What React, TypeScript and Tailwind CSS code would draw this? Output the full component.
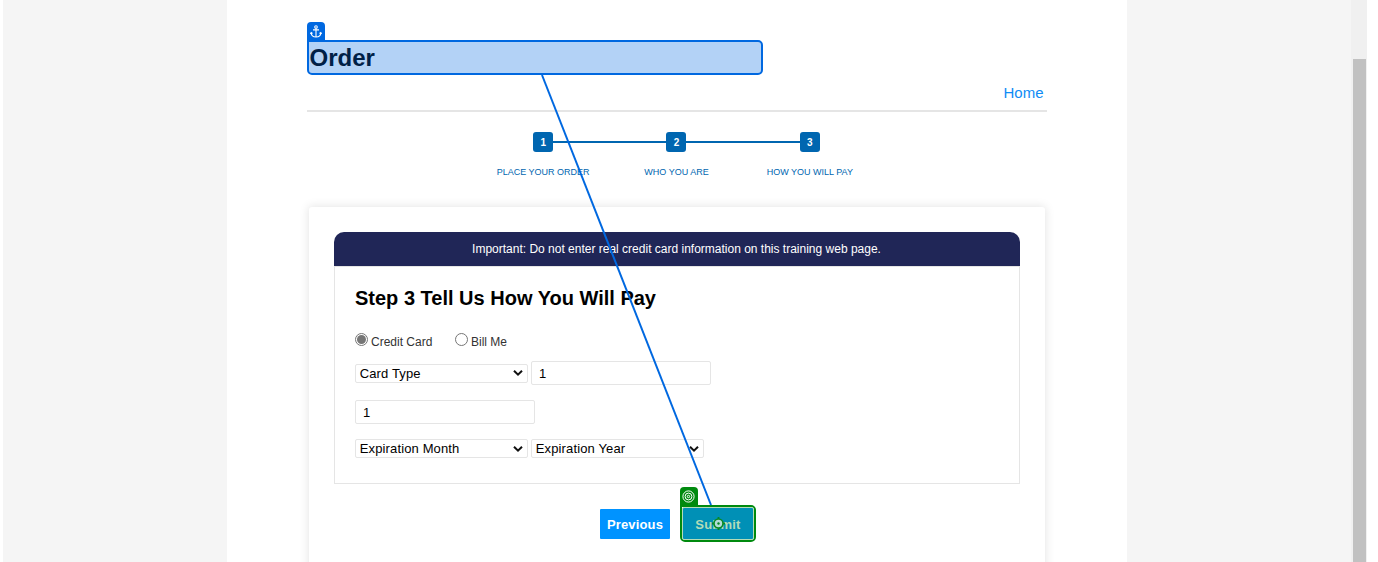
import React from "react";

function Radio({ checked = false }: { checked?: boolean }) {
  return (
    <span className="flex size-[13px] shrink-0 items-center justify-center rounded-full border border-[#767676] bg-white">
      {checked && <span className="size-[9px] rounded-full bg-[#767676]" />}
    </span>
  );
}

function Select({ label }: { label: string }) {
  return (
    <div className="flex h-[19px] w-[173px] items-center justify-between rounded-[2px] border border-[#e5e5e5] pr-1 pl-[3.7px] text-[13px] leading-[17px] text-black">
      <span className="tracking-[0.14px]">{label}</span>
      <svg width="10" height="8" viewBox="0 0 10 8" fill="none" stroke="#101010" strokeWidth="2">
        <path d="M1 1.7 L5 5.7 L9 1.7" />
      </svg>
    </div>
  );
}

function Input({ value }: { value: string }) {
  return (
    <div className="flex h-6 w-[180px] items-center rounded-[2px] border border-[#e5e5e5] px-[7px] pt-[2px] text-[13px] text-black">
      {value}
    </div>
  );
}

function Step({ n, label, line }: { n: number; label: string; line: boolean }) {
  return (
    <li className="relative flex w-[133.33px] flex-col items-center">
      {line && <span className="absolute top-[9px] right-[75px] h-[2px] w-[116px] bg-[#0066b0]" />}
      <span className="relative z-10 flex size-5 items-center justify-center rounded-[3px] bg-[#0066b0] text-[10px] font-bold text-white">
        {n}
      </span>
      <span className="mt-[15px] text-[9px] leading-[11px] whitespace-nowrap text-[#0066b0]">{label}</span>
    </li>
  );
}

export default function App() {
  return (
    <div className="relative flex h-[562px] w-[1378px] overflow-hidden bg-white pl-[3px] font-['Liberation_Sans',Arial,sans-serif]">
      <div className="flex h-full w-[1348px] justify-start bg-[#f5f5f5] pl-[224px]">
        <main className="h-full w-[900px] bg-white px-20 pt-10">
          <header className="h-[72px] border-b-2 border-[#e5e5e5]">
            <div className="relative h-[35px] w-[456px] rounded-[5px] rounded-tl-none border-2 border-[#0068e0] bg-[#b3d2f6]">
              <span className="absolute -top-5 -left-[2px] flex h-[19px] w-[18px] items-center justify-center rounded-t-[4px] bg-[#0068e0] text-white">
                <svg width="12" height="13" viewBox="0 0 12 13" fill="none" stroke="currentColor" strokeWidth="1.1">
                  <circle cx="6" cy="2" r="1.3" />
                  <path d="M6 3.3V12M3 4.9H9M1.2 7.4C1.2 10.2 3 12 6 12S10.8 10.2 10.8 7.4M.4 8.9 1.2 7.5 2.5 8.5M11.6 8.9 10.8 7.5 9.5 8.5" />
                </svg>
              </span>
              <h1 className="pl-[0.5px] text-[24px] leading-[31px] font-bold text-[#002046]">Order</h1>
            </div>
            <nav className="mt-2 flex justify-end pr-[3.5px] text-[15px] leading-5 text-[#0f8cf5]">
              <a>Home</a>
            </nav>
          </header>

          <ol className="mt-5 ml-[169.5px] flex">
            <Step n={1} label="PLACE YOUR ORDER" line={false} />
            <Step n={2} label="WHO YOU ARE" line />
            <Step n={3} label="HOW YOU WILL PAY" line />
          </ol>

          <section className="mx-[2px] mt-[29px] h-[400px] rounded-[3px] bg-white px-[25px] pt-[25px] shadow-[0_0_10px_1px_rgba(0,0,0,0.1)]">
            <div className="h-[34px] rounded-t-[10px] bg-[#202657] text-center text-[12px] leading-[34px] text-white">
              <span className="pr-px">Important: Do not enter real credit card information on this training web page.</span>
            </div>
            <div className="h-[218px] border border-[#e5e5e5] px-5 pt-[19px]">
              <h2 className="text-[20px] leading-6 font-bold text-black">Step 3 Tell Us How You Will Pay</h2>
              <div className="mt-[23px] flex h-4 text-[12px] leading-4 text-[#333]">
                <div className="flex w-[100px] gap-[3px]">
                  <Radio checked />
                  <span className="pt-[1px]">Credit Card</span>
                </div>
                <div className="flex gap-[3px]">
                  <Radio />
                  <span className="pt-[1px]">Bill Me</span>
                </div>
              </div>
              <div className="mt-3 flex items-center gap-[3px]">
                <Select label="Card Type" />
                <Input value="1" />
              </div>
              <div className="mt-[15px]">
                <Input value="1" />
              </div>
              <div className="mt-[15px] flex gap-[3px]">
                <Select label="Expiration Month" />
                <Select label="Expiration Year" />
              </div>
            </div>
            <div className="mt-[21px] flex items-center pl-[266px] text-[13px] font-bold">
              <button className="mr-[10px] h-[30px] w-[70px] rounded-[1px] bg-[#0093ff] pt-[2px] text-center tracking-[0.15px] text-white">
                Previous
              </button>
              <div className="relative h-[37px] w-[76px] rounded-[5px] rounded-tl-none border-2 border-[#008a0e]">
                <span className="absolute -top-5 -left-[2px] flex h-[19px] w-[18px] items-center justify-center rounded-t-[4px] bg-[#008a0e] pr-px">
                  <svg width="13" height="13" viewBox="0 0 13 13" fill="none" stroke="#fff">
                    <circle cx="6.5" cy="6.5" r="5.6" />
                    <circle cx="6.5" cy="6.5" r="3.4" />
                    <circle cx="6.5" cy="6.5" r="1.2" />
                  </svg>
                </span>
                <button className="h-full w-full rounded-[2px] border border-[#b3dcb7] bg-[#0090b6] pt-[3px] tracking-[0.2px] text-[#b3dcb7]">
                  Submit
                </button>
                <svg className="absolute top-[9.5px] left-[29.5px]" width="13" height="13" viewBox="0 0 13 13" fill="none">
                  <circle cx="6.5" cy="6.5" r="4.5" fill="#b3dcd8" stroke="#078926" strokeWidth="1.6" />
                  <circle cx="6.5" cy="6.5" r="1.2" fill="#078926" />
                  <path d="M6.5 0V2M6.5 11V13M0 6.5H2M11 6.5H13" stroke="#078926" strokeWidth="1.8" />
                </svg>
              </div>
            </div>
          </section>
        </main>
      </div>
      <div className="h-full w-[16px] bg-[#f0f0f0] pt-[59px] pr-px pl-[2px]">
        <div className="h-full bg-[#c1c1c1]" />
      </div>
      <svg className="pointer-events-none absolute inset-0" width="1378" height="562">
        <path d="M542 75 L711 505" stroke="#0068e0" strokeWidth="2" />
      </svg>
    </div>
  );
}
